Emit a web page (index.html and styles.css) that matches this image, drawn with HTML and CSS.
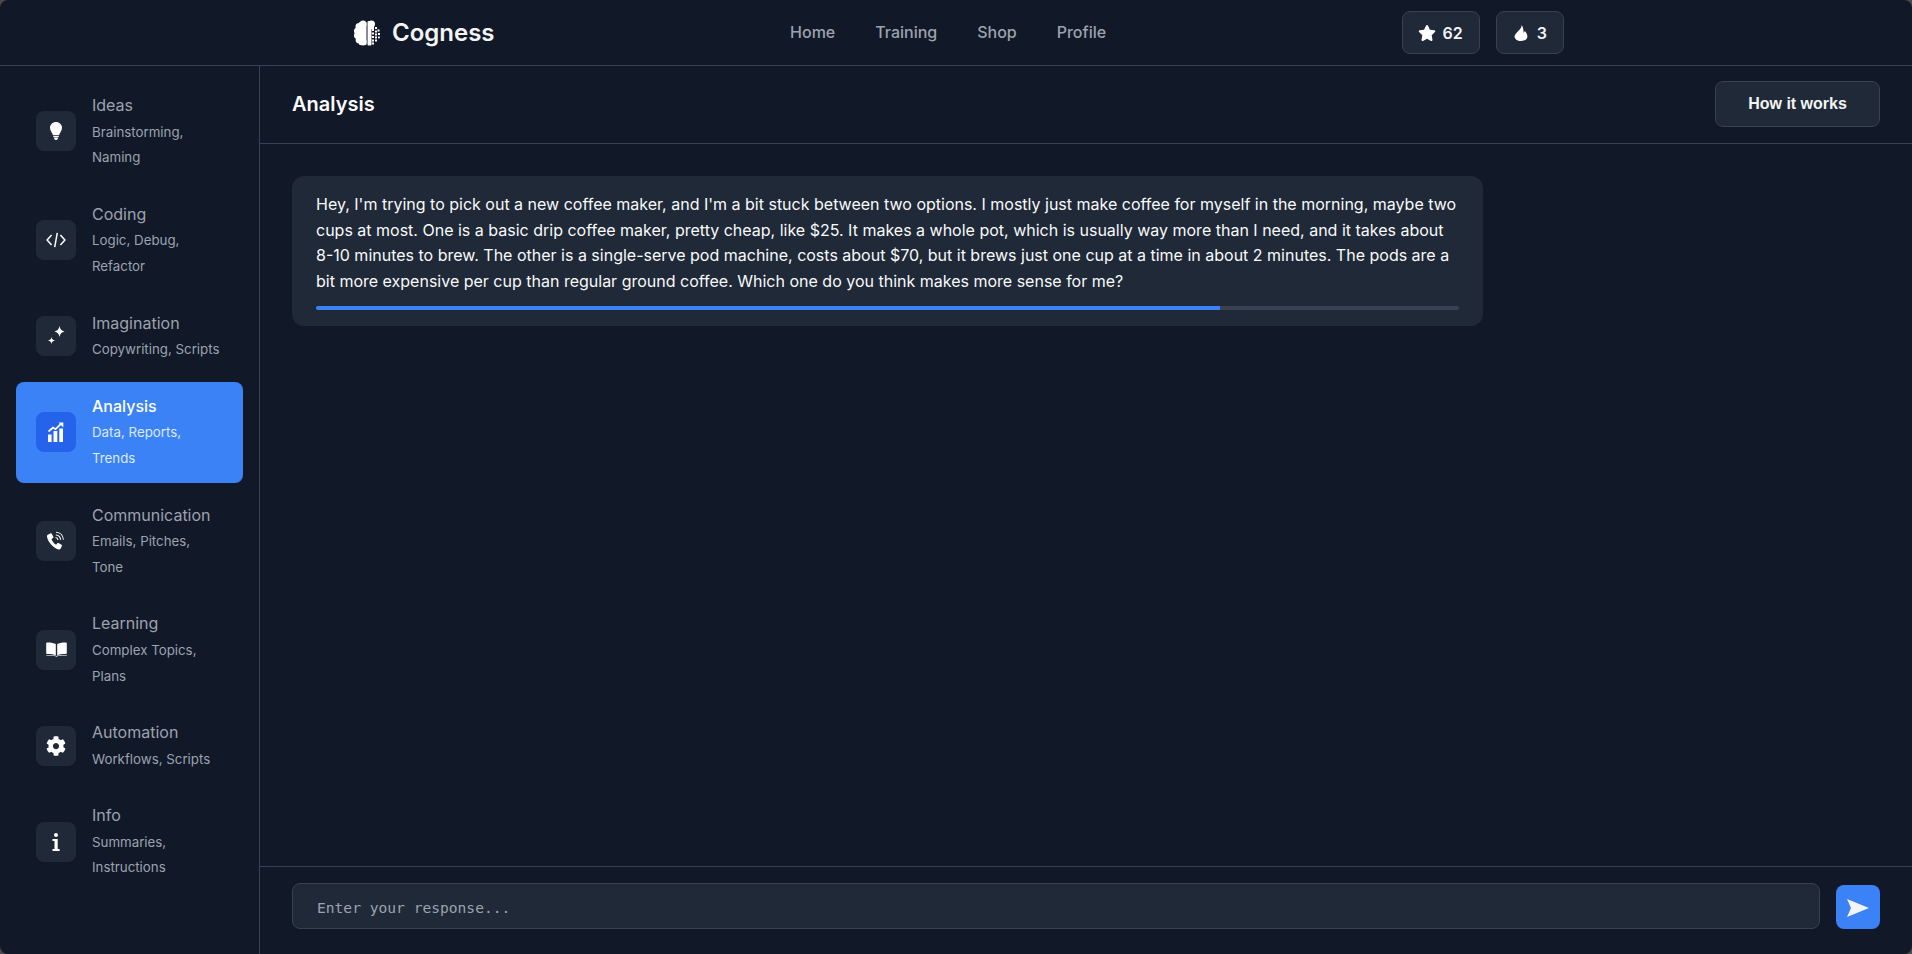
FILE: index.html
```html
<!DOCTYPE html>
<html lang="en">
<head>
<meta charset="utf-8">
<title>Cogness</title>
<link rel="stylesheet" href="styles.css">
</head>
<body>
<div class="app">
  <header class="topbar">
    <div class="topbar-inner">
      <a class="logo">
        <svg class="logo-icon" viewBox="0 0 26 26"><g fill="#fff"><circle cx="9" cy="4" r="3.500"/><circle cx="5" cy="6.500" r="3.500"/><circle cx="3.200" cy="11" r="3.200"/><circle cx="3.200" cy="15.500" r="3.200"/><circle cx="5" cy="20" r="3.400"/><circle cx="9" cy="22" r="3.600"/><rect x="5" y="2" width="7.500" height="23" rx="1"/><circle cx="17.500" cy="4" r="3.500"/><rect x="13.500" y="1" width="4" height="24.500" rx="1"/><rect x="17" y="5" width="3" height="4"/><rect x="18" y="9" width="2" height="2"/><rect x="21" y="7" width="2" height="2"/><rect x="23.500" y="9.500" width="2" height="2"/><rect x="21" y="10.500" width="2" height="2"/><rect x="18" y="12.500" width="2" height="2"/><rect x="21" y="13.500" width="2" height="2"/><rect x="24" y="13" width="2" height="2"/><rect x="18" y="16" width="2" height="2"/><rect x="21" y="16.500" width="2" height="2"/><rect x="24" y="16.500" width="1.800" height="1.800"/><rect x="18" y="19.500" width="2" height="2"/><rect x="21" y="19.500" width="2" height="2"/><rect x="18" y="22.500" width="2" height="2"/></g></svg>
        <span>Cogness</span>
      </a>
      <nav class="nav">
        <a>Home</a><a>Training</a><a>Shop</a><a>Profile</a>
      </nav>
      <div class="stats">
        <div class="stat">
          <svg class="stat-star" viewBox="0 0 576 512"><path fill="#fff" d="M316.900 18C311.600 7 300.400 0 288.100 0s-23.400 7-28.800 18L195 150.300 51.400 171.500c-12 1.800-22 10.200-25.700 21.700s-.7 24.200 7.900 32.700L137.800 329 113.200 474.700c-2 12 3 24.200 12.900 31.300s23 8 33.800 2.300l128.300-68.500 128.300 68.500c10.800 5.700 23.900 4.900 33.800-2.300s14.900-19.300 12.900-31.300L438.500 329 542.700 225.900c8.600-8.500 11.700-21.200 7.900-32.700s-13.700-19.900-25.700-21.700L381.200 150.300 316.900 18z"/></svg>
          <span>62</span>
        </div>
        <div class="stat stat-narrow">
          <svg class="stat-fire" viewBox="0 0 14 16"><path fill="#fff" d="M7.500 0C8 2.800 5.300 4.600 3.300 7 1.800 8.700 .6 10 .6 11.500.6 14 3.300 16 7 16s6.400-2 6.400-4.600c0-2.500-1.500-4.100-2.600-5.400-.3.800-.7 1.300-1.300 1.700C9.600 5 9.300 2 7.500 0z"/></svg>
          <span>3</span>
        </div>
      </div>
    </div>
  </header>
  <div class="body">
    <aside class="sidebar">
      <div class="item">
        <div class="icon"><svg class="i-bulb" viewBox="0 0 12 18"><path fill="#fff" d="M6 0C2.700 0 0 2.500 0 5.800c0 3 2 4.500 3 7.400h6c1-2.900 3-4.400 3-7.400C12 2.500 9.300 0 6 0z"/><path fill="#fff" d="M3.300 13.900h5.400v1.200H3.300zM3.500 15.600h5L7.300 17.600c-.2.300-.5.400-.8.400h-1c-.3 0-.6-.1-.8-.4z"/></svg></div>
        <div class="text"><div class="title">Ideas</div><div class="desc">Brainstorming, Naming</div></div>
      </div>
      <div class="item">
        <div class="icon"><svg class="i-code" viewBox="0 0 20 16"><path fill="none" stroke="#fff" stroke-width="1.500" d="M5.600 3 1.100 8l4.500 5M14.400 3 18.900 8l-4.500 5M11.300.8 8.700 15.200"/></svg></div>
        <div class="text"><div class="title">Coding</div><div class="desc">Logic, Debug, Refactor</div></div>
      </div>
      <div class="item">
        <div class="icon"><svg class="i-full" viewBox="0 0 40 40"><path fill="#fff" d="M23.500 10c.6 3.300 2.200 4.900 5 5.500-2.800.6-4.400 2.200-5 5.500-.6-3.300-2.200-4.900-5-5.500 2.800-.6 4.400-2.200 5-5.500zM15.500 21c.4 2.100 1.400 3.100 3.500 3.500-2.100.4-3.100 1.400-3.500 3.500-.4-2.100-1.400-3.100-3.500-3.500 2.100-.4 3.100-1.400 3.500-3.500z"/></svg></div>
        <div class="text"><div class="title">Imagination</div><div class="desc">Copywriting, Scripts</div></div>
      </div>
      <div class="item active">
        <div class="icon"><svg class="i-full" viewBox="0 0 40 40"><path fill="#fff" d="M12 22.500h3.600V30H12zM17.500 19h3.800v11h-3.800zM23.300 16.500H27V30h-3.700z"/><path fill="none" stroke="#fff" stroke-width="1.700" d="M12.500 19.500l4.500-4 2.600 1.700 5.600-5.500"/><path fill="#fff" d="M22.500 10.500H27.300V15.500z"/></svg></div>
        <div class="text"><div class="title">Analysis</div><div class="desc">Data, Reports, Trends</div></div>
      </div>
      <div class="item">
        <div class="icon"><svg class="i-full" viewBox="0 0 40 40"><path fill="#fff" d="M14.300 12.500 11.900 13.700c-.7.400-1.100 1.100-.9 2 1.300 5.800 5.800 10.700 11.500 12.800 1 .3 1.800-.1 2.200-.9l1.200-2.500c.2-.5 0-1-.4-1.300l-3-1.800c-.4-.2-.9-.1-1.200.2l-1.200 1.500c-2.100-1.100-3.900-3.300-4.600-5.700l1.500-1c.4-.3.500-.8.400-1.200l-1.700-3.100c-.3-.4-.8-.6-1.400-.2z"/><path fill="none" stroke="#fff" stroke-width="1.100" d="M19.500 16.500c1.300.1 2.300 1.100 2.500 2.500M19.800 14c2.700.1 4.600 2 4.800 4.800M20.100 11.300c4 .2 7 3.200 7.300 7.300"/></svg></div>
        <div class="text"><div class="title">Communication</div><div class="desc">Emails, Pitches, Tone</div></div>
      </div>
      <div class="item">
        <div class="icon"><svg class="i-book" viewBox="0 0 21 16"><path fill="#fff" d="M9.800 2.100v11.400C8 12.300 4.800 11.900 1 11.900c-.5 0-.8-.3-.8-.7V1.300C.2.900.6.500 1 .5c3.700-.1 6.900.4 8.800 1.600zM11.200 2.100v11.400c1.800-1.200 5-1.600 8.800-1.600.5 0 .8-.3.800-.7V1.300c0-.4-.4-.8-.8-.8-3.700-.1-6.900.4-8.800 1.600z"/><path fill="#cfd3da" d="M.2 13.200h8c.9 0 1.700.3 2.300.8.600-.5 1.400-.8 2.300-.8h8v.9h-8c-.8 0-1.600.4-2.300 1-.7-.6-1.500-1-2.300-1h-8z"/></svg></div>
        <div class="text"><div class="title">Learning</div><div class="desc">Complex Topics, Plans</div></div>
      </div>
      <div class="item">
        <div class="icon"><svg class="i-gear" viewBox="0 0 512 512"><path fill="#fff" d="M487.400 315.700l-42.600-24.600c4.300-23.200 4.300-47 0-70.200l42.600-24.600c4.900-2.800 7.100-8.600 5.500-14-11.100-35.600-30-67.800-54.700-94.600-3.800-4.100-10-5.100-14.800-2.300L380.800 110c-17.900-15.400-38.500-27.300-60.800-35.100V25.800c0-5.600-3.900-10.500-9.400-11.700-36.700-8.200-74.300-7.800-109.200 0-5.500 1.200-9.400 6.100-9.400 11.700V75c-22.200 7.900-42.800 19.800-60.800 35.100L88.700 85.500c-4.900-2.800-11-1.900-14.800 2.300-24.700 26.700-43.600 58.900-54.700 94.600-1.700 5.400.6 11.200 5.500 14L67.300 221c-4.300 23.200-4.300 47 0 70.200l-42.600 24.600c-4.900 2.800-7.100 8.600-5.500 14 11.100 35.600 30 67.800 54.700 94.600 3.800 4.100 10 5.100 14.800 2.300l42.600-24.600c17.900 15.400 38.500 27.300 60.800 35.100v49.200c0 5.600 3.900 10.500 9.400 11.700 36.700 8.200 74.300 7.800 109.200 0 5.500-1.200 9.400-6.100 9.400-11.700v-49.200c22.200-7.900 42.800-19.800 60.800-35.100l42.600 24.600c4.900 2.800 11 1.900 14.800-2.300 24.700-26.700 43.600-58.900 54.700-94.600 1.500-5.500-.7-11.300-5.600-14.100zM256 336c-44.100 0-80-35.900-80-80s35.900-80 80-80 80 35.900 80 80-35.900 80-80 80z"/></svg></div>
        <div class="text"><div class="title">Automation</div><div class="desc">Workflows, Scripts</div></div>
      </div>
      <div class="item">
        <div class="icon"><svg class="i-info" viewBox="0 0 8 18"><circle cx="4" cy="2" r="2" fill="#fff"/><path fill="#fff" d="M.5 6h5.200v10H7.600v2H.5v-2h2V8h-2z"/></svg></div>
        <div class="text"><div class="title">Info</div><div class="desc">Summaries, Instructions</div></div>
      </div>
    </aside>
    <main class="main">
      <div class="main-head">
        <h1>Analysis</h1>
        <button class="how">How it works</button>
      </div>
      <div class="content">
        <div class="card">
          <p>Hey, I'm trying to pick out a new coffee maker, and I'm a bit stuck between two options. I mostly just make coffee for myself in the morning, maybe two cups at most. One is a basic drip coffee maker, pretty cheap, like $25. It makes a whole pot, which is usually way more than I need, and it takes about 8-10 minutes to brew. The other is a single-serve pod machine, costs about $70, but it brews just one cup at a time in about 2 minutes. The pods are a bit more expensive per cup than regular ground coffee. Which one do you think makes more sense for me?</p>
          <div class="progress"><div class="fill" style="width:79.100%"></div></div>
        </div>
      </div>
      <div class="composer">
        <input class="input" type="text" placeholder="Enter your response...">
        <button class="send"><svg viewBox="0 0 22 18"><path fill="#f3f4f6" d="M0 0 22 9 0 18 4 9z"/></svg></button>
      </div>
    </main>
  </div>
</div>
</body>
</html>
```

FILE: styles.css
```css
* { box-sizing: border-box; }
html, body { margin: 0; height: 100%; background: #4a4a4a; }
body { font-family: Inter, "Liberation Sans", sans-serif; color: #fff; overflow: hidden; }
.app { height: 954px; background: #111827; border-radius: 8px; display: flex; flex-direction: column; }
.topbar { height: 66px; border-bottom: 1px solid #374151; flex: none; }
.topbar-inner { max-width: 1280px; height: 65px; margin: 0 auto; padding: 0 32px; display: flex; align-items: center; justify-content: space-between; }
.logo { display: flex; align-items: center; gap: 12px; font-size: 24px; font-weight: 600; color: #f3f4f6; }
.logo-icon { width: 26px; height: 26px; display: block; margin-left: 6px; }
.nav { display: flex; gap: 40px; padding-bottom: 2px; font-size: 16px; font-weight: 500; color: #9ca3af; }
.stats { display: flex; gap: 16px; }
.stat { height: 43px; padding: 0 16px 0 15px; display: flex; align-items: center; gap: 7px; background: #1f2937; border: 1px solid #374151; border-radius: 8px; font-size: 16px; font-weight: 600; color: #f3f4f6; }
.stat-narrow { padding: 0 16px 0 17px; gap: 9px; }
.stat-star { width: 18px; height: 16px; display: block; }
.stat-fire { width: 14px; height: 16px; display: block; }
.body { flex: 1; display: flex; min-height: 0; }
.sidebar { width: 260px; flex: none; border-right: 1px solid #374151; padding: 15px 16px; display: flex; flex-direction: column; gap: 8px; }
.item { display: flex; align-items: center; gap: 16px; padding: 12px 20px; border-radius: 8px; color: #9ca3af; }
.icon { width: 40px; height: 40px; flex: none; background: #1f2937; border-radius: 8px; display: flex; align-items: center; justify-content: center; }
.i-bulb { width: 12px; height: 18px; display: block; }
.i-code { width: 20px; height: 16px; display: block; }
.i-full { width: 40px; height: 40px; display: block; }
.i-book { width: 21px; height: 16px; display: block; }
.i-gear { width: 20px; height: 20px; display: block; }
.i-info { width: 8px; height: 18px; display: block; }
.text { margin-bottom: -1px; }
.title { font-size: 16px; line-height: 25.600px; margin-bottom: 1px; font-weight: 400; color: #9ca3af; }
.desc { font-size: 13.300px; line-height: 25.600px; color: #9ca3af; }
.item.active { background: #3b82f6; }
.item.active .icon { background: #2563eb; }
.item.active .title { color: #fff; font-weight: 500; }
.item.active .desc { color: #dbeafe; }
.main { flex: 1; min-width: 0; display: flex; flex-direction: column; }
.main-head { height: 78px; flex: none; border-bottom: 1px solid #374151; padding: 0 32px 1px; display: flex; align-items: center; justify-content: space-between; }
.main-head h1 { margin: 0; font-size: 20px; font-weight: 600; color: #f9fafb; }
.how { width: 165px; height: 46px; background: #1f2937; border: 1px solid #374151; border-radius: 8px; color: #f3f4f6; font: 700 16px "Liberation Sans", Arial, sans-serif; }
.content { flex: 1; min-height: 0; padding: 32px; }
.card { width: 1191px; background: #1f2937; border-radius: 12px; padding: 16px 24px; }
.card p { margin: 0; font-size: 16px; line-height: 25.600px; color: #f9fafb; }
.progress { height: 4px; margin-top: 12px; background: #374151; border-radius: 2px; overflow: hidden; }
.fill { height: 100%; background: #3b82f6; }
.composer { height: 88px; flex: none; border-top: 1px solid #374151; padding: 16px 32px 0; display: flex; align-items: flex-start; gap: 16px; }
.input { flex: 1; height: 46px; background: #1f2937; border: 1px solid #374151; border-radius: 8px; padding: 2px 24px 0; font: 14.600px "DejaVu Sans Mono", monospace; color: #f3f4f6; outline: none; }
.input::placeholder { color: #9ca3af; opacity: 1; }
.send { width: 44px; height: 44px; flex: none; margin-top: 2px; background: #3b82f6; border: 0; border-radius: 8px; padding: 0; display: flex; align-items: center; justify-content: center; }
.send svg { width: 22px; height: 18px; display: block; margin-top: 2px; }
```
